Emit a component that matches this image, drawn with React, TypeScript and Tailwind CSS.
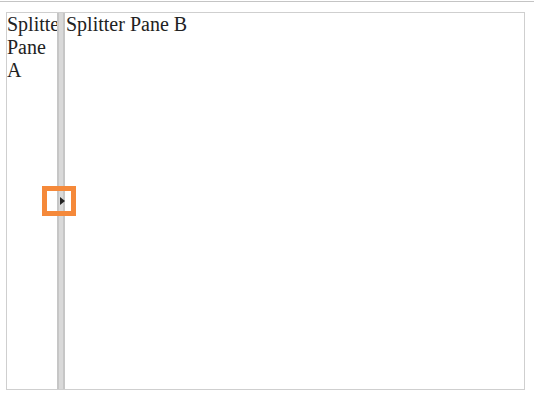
export default function App() {
  return (
    <div className="w-[534px] h-[397px] bg-white font-['Liberation_Serif',serif] text-[#222]">
      <div className="h-[2px] border-t border-[#c4c4c4] mt-px" />
      <div className="ml-[6px] mt-[9px] w-[519px] h-[378px] border border-[#cfcfcf] flex">
        <div className="w-[50px] overflow-hidden text-[20px] leading-[23px]">Splitter Pane A</div>
        <div className="relative w-[8px] bg-[#d9d9d9] border-x-2 border-[#c6c6c6]">
          <div className="absolute left-[-17px] top-[173px] w-[34px] h-[30px] border-[5px] border-[#f5893a] flex items-center justify-center">
            <div className="ml-[6px] w-0 h-0 border-y-[4px] border-y-transparent border-l-[5px] border-l-[#222]" />
          </div>
        </div>
        <div className="flex-1 overflow-hidden text-[20px] leading-[23px] pl-px">Splitter Pane B</div>
      </div>
    </div>
  );
}
